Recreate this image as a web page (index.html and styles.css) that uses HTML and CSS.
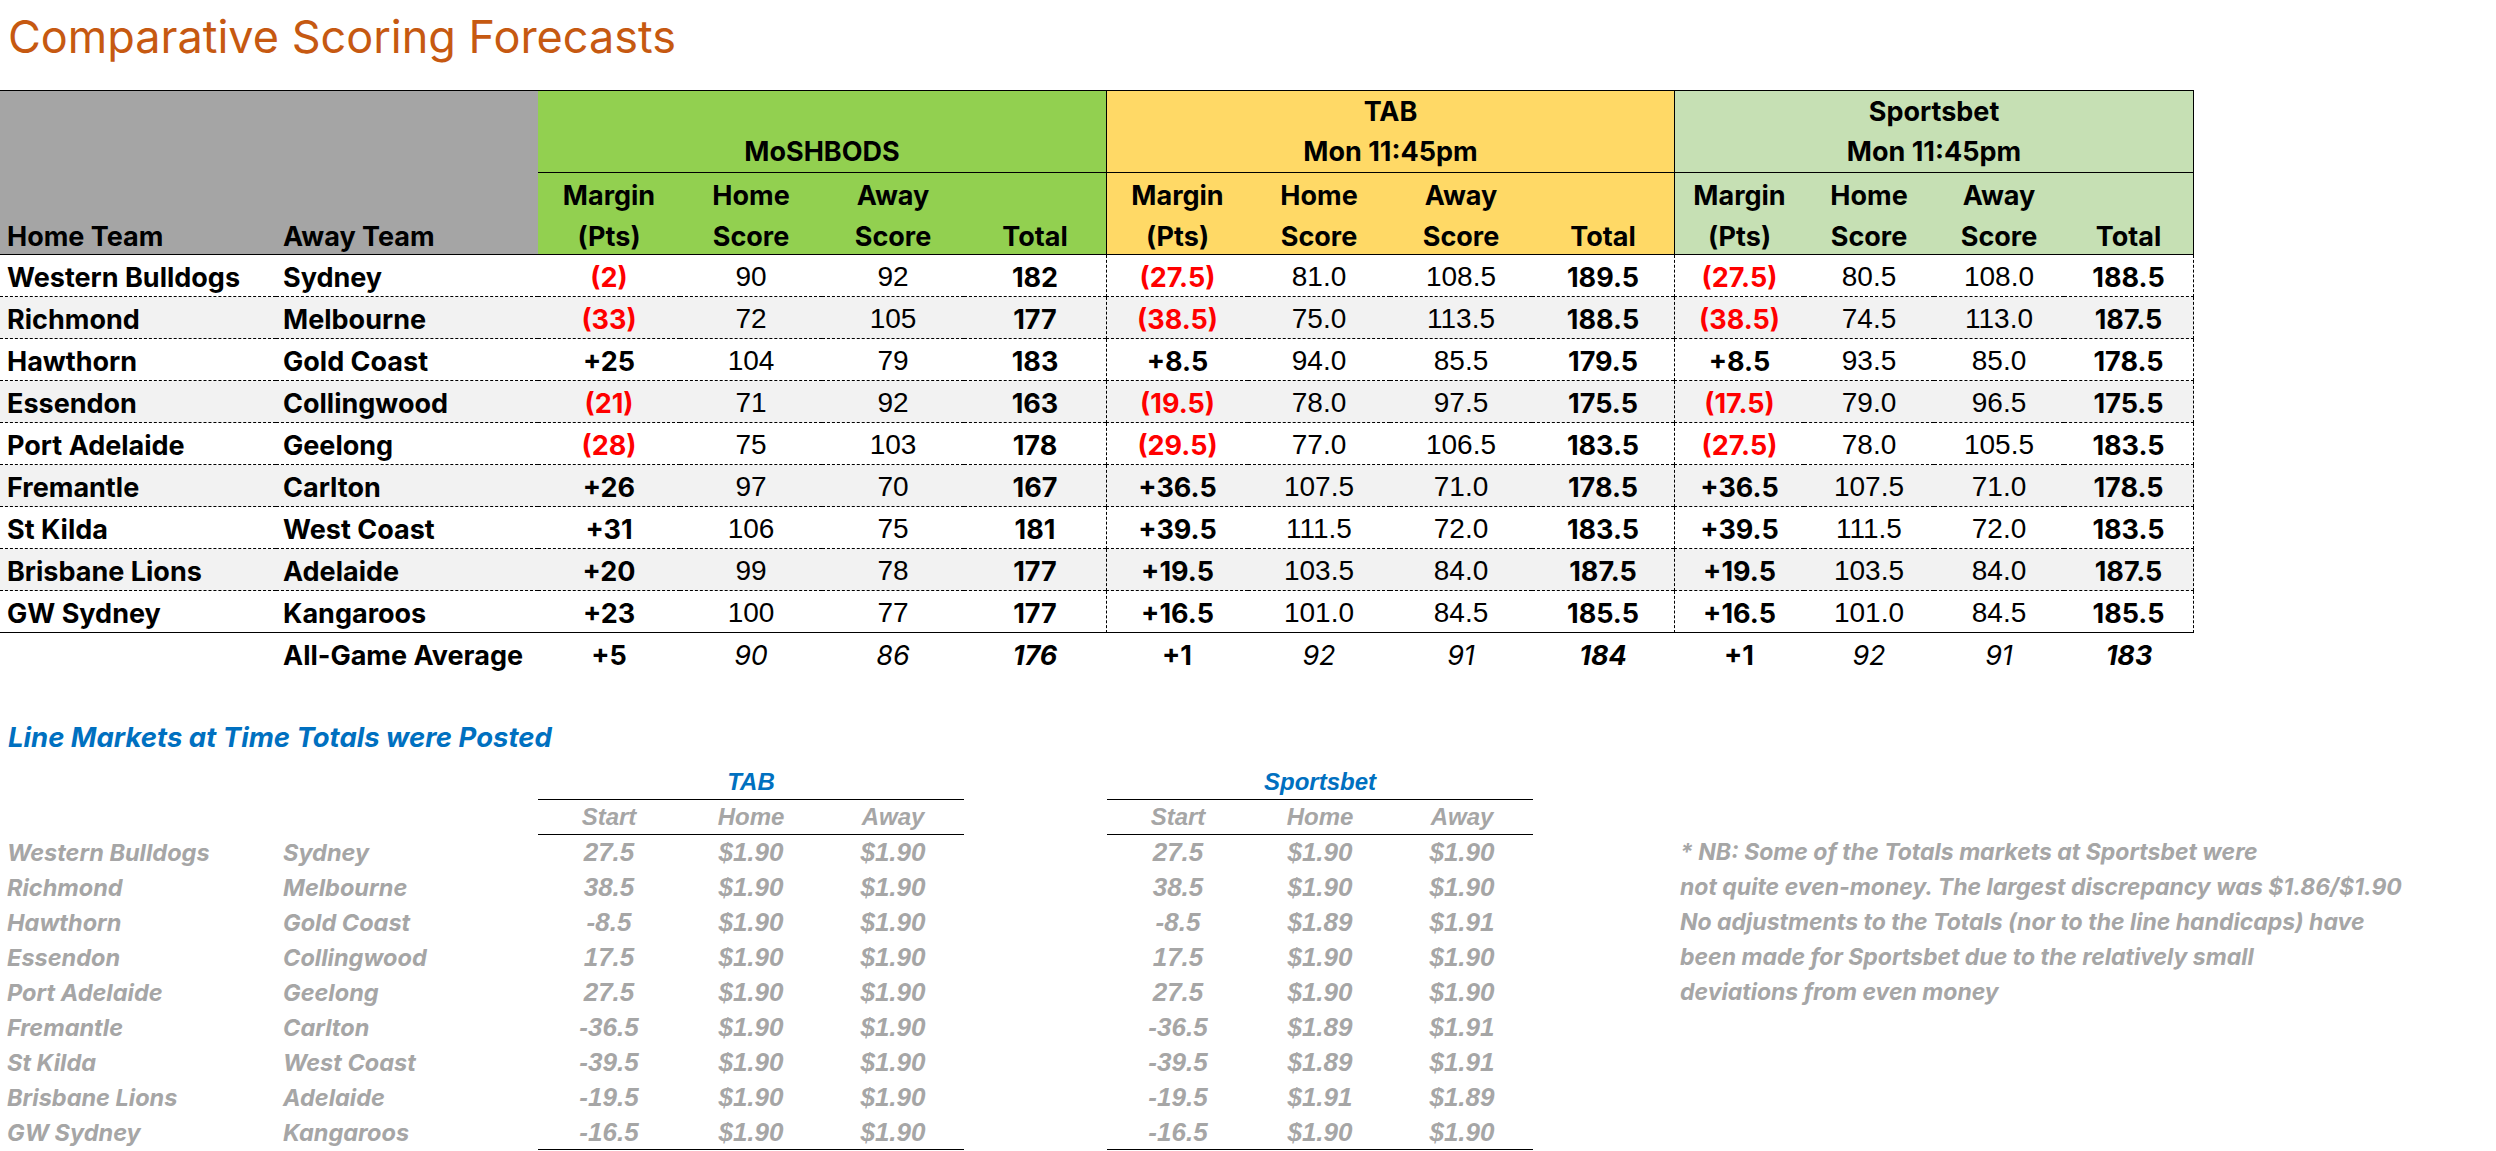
FILE: index.html
```html
<!DOCTYPE html>
<html>
<head>
<meta charset="utf-8">
<link rel="stylesheet" href="styles.css">
</head>
<body>
<div class="title">Comparative Scoring Forecasts</div>

<div class="fc">
  <div class="h gray hteam c1"><span>Home Team</span></div>
  <div class="h gray hteam c2"><span>Away Team</span></div>
  <div class="h green hmos">MoSHBODS</div>
  <div class="h yellow htab1 sl">TAB</div>
  <div class="h lgreen hsb1 sl sr">Sportsbet</div>
  <div class="h yellow htab2 sl">Mon 11:45pm</div>
  <div class="h lgreen hsb2 sl sr">Mon 11:45pm</div>

  <div class="h green sub"><span>Margin<br>(Pts)</span></div>
  <div class="h green sub"><span>Home<br>Score</span></div>
  <div class="h green sub"><span>Away<br>Score</span></div>
  <div class="h green sub"><span>Total</span></div>
  <div class="h yellow sub sl"><span>Margin<br>(Pts)</span></div>
  <div class="h yellow sub"><span>Home<br>Score</span></div>
  <div class="h yellow sub"><span>Away<br>Score</span></div>
  <div class="h yellow sub"><span>Total</span></div>
  <div class="h lgreen sub sl"><span>Margin<br>(Pts)</span></div>
  <div class="h lgreen sub"><span>Home<br>Score</span></div>
  <div class="h lgreen sub"><span>Away<br>Score</span></div>
  <div class="h lgreen sub sr"><span>Total</span></div>

  <div class="row">
    <div class="t">Western Bulldogs</div><div class="t">Sydney</div>
    <div class="m neg">(2)</div><div class="n">90</div><div class="n">92</div><div class="b">182</div>
    <div class="m neg sl">(27.5)</div><div class="n">81.0</div><div class="n">108.5</div><div class="b">189.5</div>
    <div class="m neg sl">(27.5)</div><div class="n">80.5</div><div class="n">108.0</div><div class="b sr">188.5</div>
  </div>
  <div class="row alt">
    <div class="t">Richmond</div><div class="t">Melbourne</div>
    <div class="m neg">(33)</div><div class="n">72</div><div class="n">105</div><div class="b">177</div>
    <div class="m neg sl">(38.5)</div><div class="n">75.0</div><div class="n">113.5</div><div class="b">188.5</div>
    <div class="m neg sl">(38.5)</div><div class="n">74.5</div><div class="n">113.0</div><div class="b sr">187.5</div>
  </div>
  <div class="row">
    <div class="t">Hawthorn</div><div class="t">Gold Coast</div>
    <div class="m">+25</div><div class="n">104</div><div class="n">79</div><div class="b">183</div>
    <div class="m sl">+8.5</div><div class="n">94.0</div><div class="n">85.5</div><div class="b">179.5</div>
    <div class="m sl">+8.5</div><div class="n">93.5</div><div class="n">85.0</div><div class="b sr">178.5</div>
  </div>
  <div class="row alt">
    <div class="t">Essendon</div><div class="t">Collingwood</div>
    <div class="m neg">(21)</div><div class="n">71</div><div class="n">92</div><div class="b">163</div>
    <div class="m neg sl">(19.5)</div><div class="n">78.0</div><div class="n">97.5</div><div class="b">175.5</div>
    <div class="m neg sl">(17.5)</div><div class="n">79.0</div><div class="n">96.5</div><div class="b sr">175.5</div>
  </div>
  <div class="row">
    <div class="t">Port Adelaide</div><div class="t">Geelong</div>
    <div class="m neg">(28)</div><div class="n">75</div><div class="n">103</div><div class="b">178</div>
    <div class="m neg sl">(29.5)</div><div class="n">77.0</div><div class="n">106.5</div><div class="b">183.5</div>
    <div class="m neg sl">(27.5)</div><div class="n">78.0</div><div class="n">105.5</div><div class="b sr">183.5</div>
  </div>
  <div class="row alt">
    <div class="t">Fremantle</div><div class="t">Carlton</div>
    <div class="m">+26</div><div class="n">97</div><div class="n">70</div><div class="b">167</div>
    <div class="m sl">+36.5</div><div class="n">107.5</div><div class="n">71.0</div><div class="b">178.5</div>
    <div class="m sl">+36.5</div><div class="n">107.5</div><div class="n">71.0</div><div class="b sr">178.5</div>
  </div>
  <div class="row">
    <div class="t">St Kilda</div><div class="t">West Coast</div>
    <div class="m">+31</div><div class="n">106</div><div class="n">75</div><div class="b">181</div>
    <div class="m sl">+39.5</div><div class="n">111.5</div><div class="n">72.0</div><div class="b">183.5</div>
    <div class="m sl">+39.5</div><div class="n">111.5</div><div class="n">72.0</div><div class="b sr">183.5</div>
  </div>
  <div class="row alt">
    <div class="t">Brisbane Lions</div><div class="t">Adelaide</div>
    <div class="m">+20</div><div class="n">99</div><div class="n">78</div><div class="b">177</div>
    <div class="m sl">+19.5</div><div class="n">103.5</div><div class="n">84.0</div><div class="b">187.5</div>
    <div class="m sl">+19.5</div><div class="n">103.5</div><div class="n">84.0</div><div class="b sr">187.5</div>
  </div>
  <div class="row last">
    <div class="t">GW Sydney</div><div class="t">Kangaroos</div>
    <div class="m">+23</div><div class="n">100</div><div class="n">77</div><div class="b">177</div>
    <div class="m sl">+16.5</div><div class="n">101.0</div><div class="n">84.5</div><div class="b">185.5</div>
    <div class="m sl">+16.5</div><div class="n">101.0</div><div class="n">84.5</div><div class="b sr">185.5</div>
  </div>
  <div class="row avg">
    <div class="t"></div><div class="t">All-Game Average</div>
    <div class="m">+5</div><div class="i">90</div><div class="i">86</div><div class="bi">176</div>
    <div class="m">+1</div><div class="i">92</div><div class="i">91</div><div class="bi">184</div>
    <div class="m">+1</div><div class="i">92</div><div class="i">91</div><div class="bi">183</div>
  </div>
</div>

<div class="lm-title">Line Markets at Time Totals were Posted</div>

<div class="lower">
  <div class="lgrid">
    <div></div><div></div><div class="lab span3">TAB</div><div></div><div class="lab span3">Sportsbet</div>
    <div></div><div></div>
    <div class="lh">Start</div><div class="lh">Home</div><div class="lh">Away</div><div></div>
    <div class="lh">Start</div><div class="lh">Home</div><div class="lh">Away</div>

    <div class="lt">Western Bulldogs</div><div class="lt">Sydney</div>
    <div class="ln">27.5</div><div class="ln">$1.90</div><div class="ln">$1.90</div><div></div>
    <div class="ln">27.5</div><div class="ln">$1.90</div><div class="ln">$1.90</div>

    <div class="lt">Richmond</div><div class="lt">Melbourne</div>
    <div class="ln">38.5</div><div class="ln">$1.90</div><div class="ln">$1.90</div><div></div>
    <div class="ln">38.5</div><div class="ln">$1.90</div><div class="ln">$1.90</div>

    <div class="lt">Hawthorn</div><div class="lt">Gold Coast</div>
    <div class="ln">-8.5</div><div class="ln">$1.90</div><div class="ln">$1.90</div><div></div>
    <div class="ln">-8.5</div><div class="ln">$1.89</div><div class="ln">$1.91</div>

    <div class="lt">Essendon</div><div class="lt">Collingwood</div>
    <div class="ln">17.5</div><div class="ln">$1.90</div><div class="ln">$1.90</div><div></div>
    <div class="ln">17.5</div><div class="ln">$1.90</div><div class="ln">$1.90</div>

    <div class="lt">Port Adelaide</div><div class="lt">Geelong</div>
    <div class="ln">27.5</div><div class="ln">$1.90</div><div class="ln">$1.90</div><div></div>
    <div class="ln">27.5</div><div class="ln">$1.90</div><div class="ln">$1.90</div>

    <div class="lt">Fremantle</div><div class="lt">Carlton</div>
    <div class="ln">-36.5</div><div class="ln">$1.90</div><div class="ln">$1.90</div><div></div>
    <div class="ln">-36.5</div><div class="ln">$1.89</div><div class="ln">$1.91</div>

    <div class="lt">St Kilda</div><div class="lt">West Coast</div>
    <div class="ln">-39.5</div><div class="ln">$1.90</div><div class="ln">$1.90</div><div></div>
    <div class="ln">-39.5</div><div class="ln">$1.89</div><div class="ln">$1.91</div>

    <div class="lt">Brisbane Lions</div><div class="lt">Adelaide</div>
    <div class="ln">-19.5</div><div class="ln">$1.90</div><div class="ln">$1.90</div><div></div>
    <div class="ln">-19.5</div><div class="ln">$1.91</div><div class="ln">$1.89</div>

    <div class="lt">GW Sydney</div><div class="lt">Kangaroos</div>
    <div class="ln lb">-16.5</div><div class="ln lb">$1.90</div><div class="ln lb">$1.90</div><div></div>
    <div class="ln lb">-16.5</div><div class="ln lb">$1.90</div><div class="ln lb">$1.90</div>
  </div>
  <div class="note">
    <div>* NB: Some of the Totals markets at Sportsbet were</div>
    <div>not quite even-money. The largest discrepancy was $1.86/$1.90</div>
    <div>No adjustments to the Totals (nor to the line handicaps) have</div>
    <div>been made for Sportsbet due to the relatively small</div>
    <div>deviations from even money</div>
  </div>
</div>
</body>
</html>
```

FILE: styles.css
```css
html, body {
  margin: 0;
  padding: 0;
  background: #ffffff;
}
body {
  font-family: Inter, "Liberation Sans", sans-serif;
  color: #000;
  width: 2496px;
  height: 1151px;
  overflow: hidden;
}

.title {
  box-sizing: border-box;
  height: 90px;
  padding: 10px 0 0 8px;
  font-size: 45px;
  line-height: 54px;
  color: #C65911;
  font-weight: 400;
}

/* ---------- upper forecast grid ---------- */
.fc {
  display: grid;
  grid-template-columns: 276px 262px repeat(8, 142px) repeat(4, 130px);
  grid-template-rows: repeat(4, 41px) repeat(10, 42px);
  width: 2194px;
  border-top: 1px solid #000;
}
.fc > .h,
.fc > .row > div {
  box-sizing: border-box;
  display: flex;
  align-items: center;
  justify-content: center;
  font-size: 27px;
  white-space: nowrap;
}
.fc > .row { display: contents; }

.fc > .h {
  flex-direction: column;
  justify-content: flex-end;
  font-weight: 700;
  line-height: 41px;
  text-align: center;
  border-bottom: 1px solid #000;
}
.fc > .h > span { margin-bottom: -3px; }
.gray { background: #A5A5A5; }
.green { background: #92D050; }
.yellow { background: #FFD966; }
.lgreen { background: #C6E0B4; }

.fc > .hteam {
  grid-row: 1 / 5;
  align-items: flex-start;
  padding-left: 7px;
}
.c1 { grid-column: 1; }
.c2 { grid-column: 2; }
.hmos { grid-row: 1 / 3; grid-column: 3 / 7; }
.fc > .htab1 { grid-row: 1; grid-column: 7 / 11; border-bottom: none; }
.fc > .hsb1 { grid-row: 1; grid-column: 11 / 15; border-bottom: none; }
.htab2 { grid-row: 2; grid-column: 7 / 11; }
.hsb2 { grid-row: 2; grid-column: 11 / 15; }
.sub { grid-row: 3 / 5; }

.fc > .h.sl { border-left: 1px solid #000; }
.fc > .h.sr { border-right: 1px solid #000; }

.fc > .row > div {
  border-bottom: 1px dashed #000;
  padding-top: 3px;
}
.fc > .row.alt > div { background: #F2F2F2; }
.fc > .row.last > div { border-bottom: 1px solid #000; }
.fc > .row > .sl { border-left: 1px dashed #000; }
.fc > .row > .sr { border-right: 1px dashed #000; }
.fc > .row.avg > div { border: none; }

.fc > .row > .t {
  justify-content: flex-start;
  padding-left: 7px;
  font-weight: 700;
}
.fc > .row > .m { font-weight: 700; }
.fc > .row > .neg { color: #FF0000; }
.fc > .row > .n {
  font-family: "Liberation Sans", Arial, sans-serif;
  font-size: 28px;
}
.fc > .row > .b { font-weight: 700; }
.fc > .row > .i { font-style: italic; }
.fc > .row > .bi { font-weight: 700; font-style: italic; }

/* ---------- line markets ---------- */
.lm-title {
  margin-top: 45px;
  height: 35px;
  line-height: 35px;
  padding-left: 8px;
  font-size: 27.5px;
  font-weight: 700;
  font-style: italic;
  color: #0070C0;
}

.lower {
  display: flex;
  margin-top: 10px;
}
.lgrid {
  display: grid;
  grid-template-columns: 276px 262px 142px 142px 142px 143px 142px 142px 142px;
  grid-auto-rows: 35px;
}
.lgrid > div {
  box-sizing: border-box;
  display: flex;
  align-items: center;
  justify-content: center;
  white-space: nowrap;
  color: #A6A6A6;
}
.lgrid > .span3 { grid-column: span 3; }
.lgrid > .lab {
  font-family: "Liberation Sans", Arial, sans-serif;
  font-size: 24px;
  font-weight: 700;
  font-style: italic;
  color: #0070C0;
  border-bottom: 1px solid #000;
}
.lgrid > .lh {
  font-family: "Liberation Sans", Arial, sans-serif;
  font-size: 24px;
  font-weight: 700;
  font-style: italic;
  border-bottom: 1px solid #000;
}
.lgrid > .lt {
  justify-content: flex-start;
  padding-left: 7px;
  font-size: 23.5px;
  font-weight: 700;
  font-style: italic;
}
.lgrid > .ln {
  font-family: "Liberation Sans", Arial, sans-serif;
  font-size: 26px;
  font-weight: 700;
  font-style: italic;
}
.lgrid > .ln.lb { border-bottom: 1px solid #000; }

.note {
  margin-left: 147px;
  padding-top: 70px;
  font-size: 23px;
  line-height: 35px;
  font-weight: 700;
  font-style: italic;
  color: #A6A6A6;
  white-space: nowrap;
}
```
